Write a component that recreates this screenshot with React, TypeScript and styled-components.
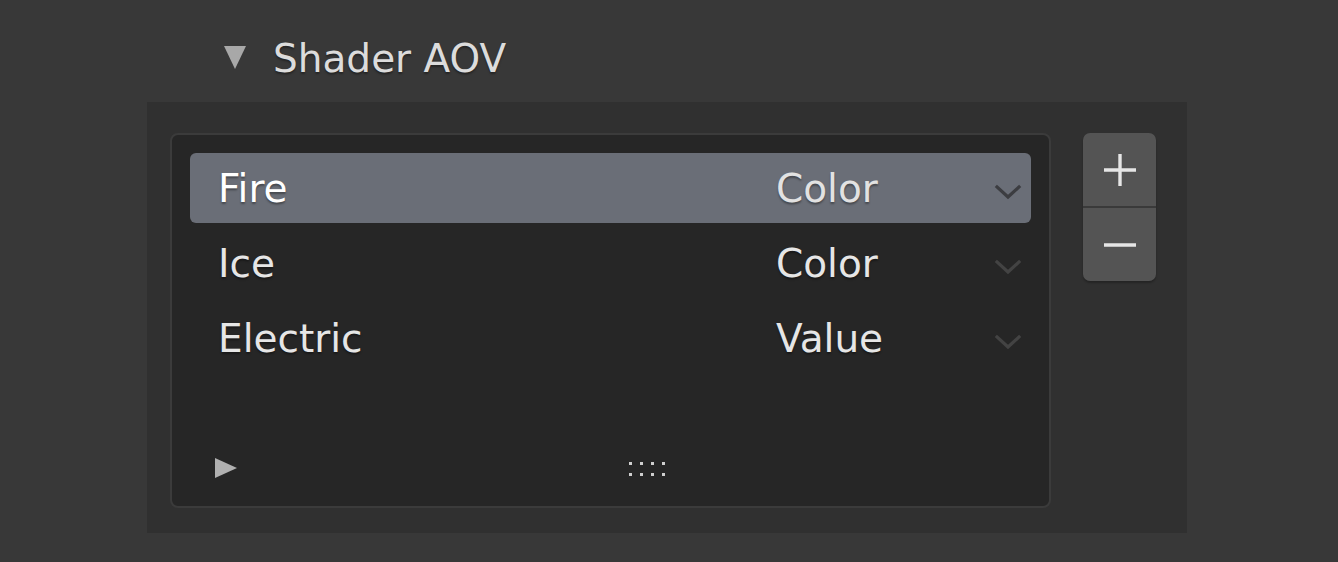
import React from "react";
import styled, { createGlobalStyle } from "styled-components";

const GlobalStyle = createGlobalStyle`
  html, body {
    margin: 0;
    padding: 0;
    background: #383838;
  }
  body {
    font-family: "DejaVu Sans", "Liberation Sans", sans-serif;
    color: #e6e6e6;
  }
`;

const Page = styled.div`
  width: 1338px;
  height: 562px;
  overflow: hidden;
`;

const Header = styled.div`
  display: flex;
  align-items: center;
  height: 102px;
  padding-left: 223px;
  box-sizing: border-box;
  padding-top: 14px;
`;

const HeaderTitle = styled.span`
  margin-left: 26px;
  font-size: 39px;
  color: #dcdcdc;
  text-shadow: 0 2px 2px rgba(0, 0, 0, 0.35);
`;

const Panel = styled.div`
  display: flex;
  align-items: flex-start;
  margin-left: 147px;
  width: 1040px;
  height: 431px;
  box-sizing: border-box;
  padding: 31px 0 0 23px;
  background: #303030;
`;

const ListBox = styled.div`
  display: flex;
  flex-direction: column;
  width: 881px;
  height: 375px;
  box-sizing: border-box;
  padding: 18px 18px 0 18px;
  background: #262626;
  border: 2px solid #3b3b3b;
  border-radius: 8px;
`;

const Rows = styled.div`
  display: flex;
  flex-direction: column;
  gap: 5px;
  height: 293px;
`;

const Row = styled.div<{ selected?: boolean }>`
  display: flex;
  align-items: center;
  height: 70px;
  flex-shrink: 0;
  padding-left: 28px;
  border-radius: 6px;
  background: ${(p) => (p.selected ? "#6a6e77" : "transparent")};
  font-size: 39px;
  color: ${(p) => (p.selected ? "#ffffff" : "#e6e6e6")};
  text-shadow: 0 2px 2px rgba(0, 0, 0, 0.35);
`;

const Name = styled.span`
  width: 558px;
`;

const TypeLabel = styled.span<{ selected?: boolean }>`
  flex: 1;
  color: ${(p) => (p.selected ? "#e2e2e2" : "#e6e6e6")};
`;

const Chevron = styled.svg`
  width: 28px;
  height: 16px;
  margin-right: 9px;
  margin-top: 8px;
`;

const Footer = styled.div`
  display: flex;
  align-items: center;
  height: 44px;
  padding-left: 24px;
`;

const Grip = styled.div`
  display: grid;
  grid-template-columns: repeat(4, 3px);
  grid-auto-rows: 3px;
  column-gap: 8px;
  row-gap: 8px;
  margin-left: 391px;
  margin-top: 2px;
  span {
    background: #cfcfcf;
  }
`;

const ButtonStack = styled.div`
  display: flex;
  flex-direction: column;
  margin-left: 32px;
  width: 73px;
  border-radius: 7px;
  background: #2c2c2c;
  box-shadow: 0 2px 2px rgba(0, 0, 0, 0.25);
  overflow: hidden;
`;

const StackButton = styled.div<{ first?: boolean }>`
  display: flex;
  align-items: center;
  justify-content: center;
  height: 73px;
  background: #545454;
  border-top: ${(p) => (p.first ? "none" : "2px solid #3a3a3a")};
`;

const ChevronDown = ({ color }: { color: string }) => (
  <Chevron viewBox="0 0 28 16">
    <path d="M3 3 L14 13 L25 3" fill="none" stroke={color} strokeWidth="3.2" strokeLinecap="square" />
  </Chevron>
);

const items = [
  { name: "Fire", type: "Color", selected: true },
  { name: "Ice", type: "Color", selected: false },
  { name: "Electric", type: "Value", selected: false },
];

export default function App() {
  return (
    <Page>
      <GlobalStyle />
      <Header>
        <svg width="24" height="26" viewBox="0 0 24 26">
          <path d="M1 1 L23 1 L12 24 Z" fill="#a8a8a8" />
        </svg>
        <HeaderTitle>Shader AOV</HeaderTitle>
      </Header>
      <Panel>
        <ListBox>
          <Rows>
            {items.map((it) => (
              <Row key={it.name} selected={it.selected}>
                <Name>{it.name}</Name>
                <TypeLabel selected={it.selected}>{it.type}</TypeLabel>
                <ChevronDown color={it.selected ? "#3c3d41" : "#434343"} />
              </Row>
            ))}
          </Rows>
          <Footer>
            <svg width="24" height="22" viewBox="0 0 24 22">
              <path d="M1 1 L23 11 L1 21 Z" fill="#b0b0b0" />
            </svg>
            <Grip>
              {Array.from({ length: 8 }).map((_, i) => (
                <span key={i} />
              ))}
            </Grip>
          </Footer>
        </ListBox>
        <ButtonStack>
          <StackButton first>
            <svg width="36" height="36" viewBox="0 0 36 36">
              <path d="M18 2 V34 M2 18 H34" stroke="#e6e6e6" strokeWidth="3.4" />
            </svg>
          </StackButton>
          <StackButton>
            <svg width="36" height="36" viewBox="0 0 36 36">
              <path d="M2 18 H34" stroke="#e6e6e6" strokeWidth="3.4" />
            </svg>
          </StackButton>
        </ButtonStack>
      </Panel>
    </Page>
  );
}
